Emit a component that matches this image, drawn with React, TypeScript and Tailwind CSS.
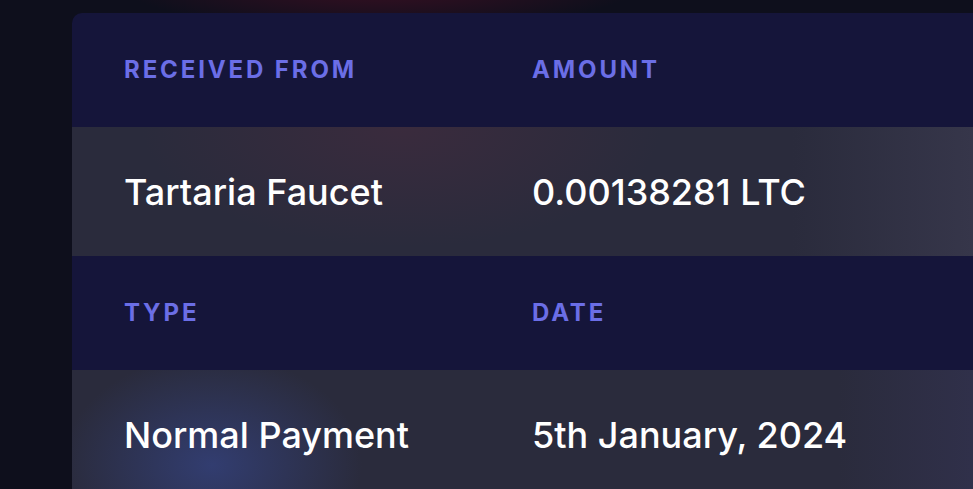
import React from "react";

const rows = [
  { labels: ["Received From", "Amount"], values: ["Tartaria Faucet", "0.00138281 LTC"] },
  { labels: ["Type", "Date"], values: ["Normal Payment", "5th January, 2024"] },
];

function LabelRow({ labels }: { labels: string[] }) {
  return (
    <div className="grid h-[114px] grid-cols-[408px_1fr] items-center bg-[#15153a] pl-[52px]">
      {labels.map((l) => (
        <span key={l} className="text-[24px] font-bold uppercase tracking-[0.12em] text-[#6b6ee6]">
          {l}
        </span>
      ))}
    </div>
  );
}

function ValueRow({ values, glow }: { values: string[]; glow: string }) {
  return (
    <div className={`grid h-[129px] grid-cols-[408px_1fr] items-center pl-[52px] ${glow}`}>
      {values.map((v) => (
        <span key={v} className="text-[36px] font-medium text-white">
          {v}
        </span>
      ))}
    </div>
  );
}

export default function App() {
  return (
    <div
      className="relative h-[489px] w-full overflow-hidden bg-[#0e0f1c] pt-[13px]"
      style={{ fontFamily: "Inter, 'Noto Sans', sans-serif" }}
    >
      {/* reddish glow bleeding over the top edge */}
      <div className="pointer-events-none absolute left-[120px] top-[-60px] h-[90px] w-[520px] rounded-full bg-[radial-gradient(closest-side,#3a0f22,transparent)]" />

      <div className="relative ml-[72px] overflow-hidden rounded-tl-[10px]">
        <LabelRow labels={rows[0].labels} />
        <ValueRow
          values={rows[0].values}
          glow="bg-[radial-gradient(ellipse_260px_120px_at_330px_0px,#3a2b3d,transparent),linear-gradient(90deg,#2a2b3c_0%,#2a2b3c_80%,#36364a_100%)]"
        />
        <LabelRow labels={rows[1].labels} />
        <ValueRow
          values={rows[1].values}
          glow="bg-[radial-gradient(ellipse_150px_110px_at_140px_95px,#323d70,transparent),linear-gradient(90deg,#2a2b3c_0%,#2a2b3c_85%,#30304a_100%)]"
        />
      </div>
    </div>
  );
}
